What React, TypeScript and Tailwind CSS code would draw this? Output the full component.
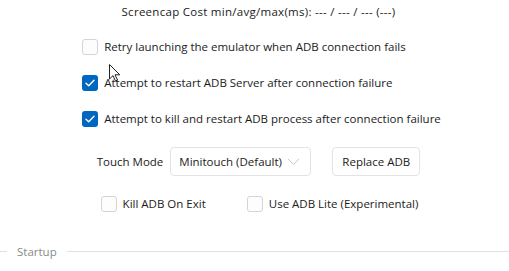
import React from 'react';

const Check: React.FC<{ checked?: boolean }> = ({ checked }) =>
  checked ? (
    <span className="flex h-[16px] w-[16px] shrink-0 items-center justify-center rounded-[3px] bg-[#0067c0]">
      <svg width="10" height="8" viewBox="0 0 10 8" fill="none">
        <path d="M1 4.2 L3.7 6.8 L9 1.3" stroke="white" strokeWidth="1.4" strokeLinecap="round" strokeLinejoin="round" />
      </svg>
    </span>
  ) : (
    <span className="h-[16px] w-[16px] shrink-0 rounded-[3px] border border-[#d4d4d4] bg-[#fdfdfd]" />
  );

const CheckRow: React.FC<{ checked?: boolean; label: string }> = ({ checked, label }) => (
  <label className="flex h-[16px] items-center gap-[6px]">
    <Check checked={checked} />
    <span>{label}</span>
  </label>
);

export default function App() {
  return (
    <div
      className="relative h-[271px] w-[509px] overflow-hidden bg-white text-[11.5px] text-[#1b1b1b]"
      style={{ fontFamily: '"Open Sans", "Noto Sans", sans-serif' }}
    >
      <div className="flex flex-col items-center pl-[8px]">
        <div className="mt-[3px] leading-[18px] tracking-[0.28px]">Screencap Cost min/avg/max(ms): --- / --- / --- (---)</div>

        <div className="ml-[6px] mt-[18px] flex flex-col gap-[20px] leading-[16px]">
          <CheckRow label="Retry launching the emulator when ADB connection fails" />
          <CheckRow checked label="Attempt to restart ADB Server after connection failure" />
          <CheckRow checked label="Attempt to kill and restart ADB process after connection failure" />
        </div>

        <div className="mt-[20px] flex items-center">
          <span className="mr-[7px]">Touch Mode</span>
          <div className="flex h-[29px] w-[141px] items-center justify-between rounded-[4px] border border-[#e3e3e3] pl-[8px] pr-[10px]">
            <span>Minitouch (Default)</span>
            <svg width="13" height="8" viewBox="0 0 13 8" fill="none">
              <path d="M1 1 L6.5 6.5 L12 1" stroke="#c8c8c8" strokeWidth="1" />
            </svg>
          </div>
          <button className="ml-[21px] flex h-[29px] w-[88px] items-center justify-center rounded-[4px] border border-[#e3e3e3]">
            Replace ADB
          </button>
        </div>

        <div className="ml-[2px] mt-[20px] flex items-center gap-[41px] leading-[16px]">
          <CheckRow label="Kill ADB On Exit" />
          <CheckRow label="Use ADB Lite (Experimental)" />
        </div>
      </div>

      <div className="mt-[31px] flex items-center">
        <div className="h-px w-[7px] bg-[#e0e0e0]" />
        <span className="px-[10px] text-[#8a8a8a]">Startup</span>
        <div className="h-px flex-1 bg-[#e0e0e0]" />
      </div>

      <svg className="absolute left-[109px] top-[64px]" width="12" height="18" viewBox="0 0 12 18">
        <path d="M0.5 0.5 L0.5 15 L4 11.6 L6.5 17 L8.5 16 L6 10.8 L10.8 10.8 Z" fill="white" stroke="#222" strokeWidth="1" />
      </svg>
    </div>
  );
}
